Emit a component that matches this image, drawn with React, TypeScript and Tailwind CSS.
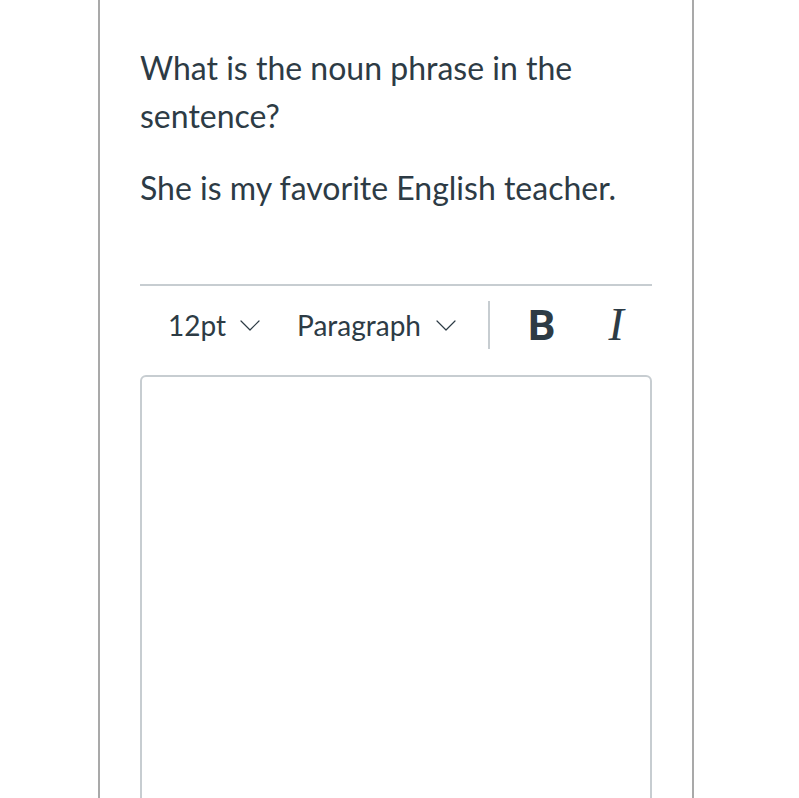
import React from "react";

function Chevron() {
  return (
    <svg width="20" height="11" viewBox="0 0 20 11" fill="none" stroke="#2d3b45" strokeWidth="1.2" strokeLinecap="round" strokeLinejoin="round">
      <path d="M1 1l9 9 9-9" />
    </svg>
  );
}

export default function App() {
  return (
    <div className="w-[799px] h-[798px] overflow-hidden bg-white" style={{ fontFamily: "Lato, 'Noto Sans', sans-serif" }}>
      <div className="ml-[98px] w-[596px] h-[798px] border-x-2 border-[#a9a9a9] px-[40px] pt-[44px] text-[#2d3b45]">
        <p className="text-[32px] leading-[48px]">What is the noun phrase in the sentence?</p>
        <p className="text-[32px] leading-[48px] mt-[24px]">She is my favorite English teacher.</p>
        <div className="mt-[72px] border-t-2 border-[#c7cdd1]">
          <div className="flex items-center h-[78px] pl-[28px] text-[28px]">
            <div className="flex items-center gap-[14px]">
              <span>12pt</span>
              <Chevron />
            </div>
            <div className="flex items-center gap-[15px] ml-[37px]">
              <span>Paragraph</span>
              <Chevron />
            </div>
            <div className="ml-[32px] w-[2px] h-[48px] bg-[#c7cdd1]" />
            <span className="ml-[38px] text-[43px] font-bold leading-none" style={{ fontFamily: "Roboto, sans-serif" }}>B</span>
            <span className="ml-[53px] text-[46px] italic leading-none" style={{ fontFamily: "'Liberation Serif', serif" }}>I</span>
          </div>
          <div className="mt-[11px] h-[440px] border-2 border-[#c7cdd1] rounded-t-[6px]" />
        </div>
      </div>
    </div>
  );
}
